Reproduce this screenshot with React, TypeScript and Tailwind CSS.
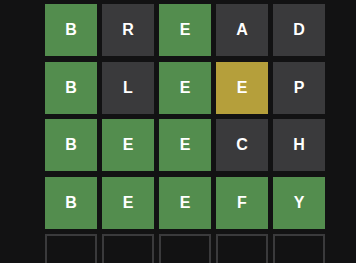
const rows: { letter: string; state: "correct" | "present" | "absent" }[][] = [
  [
    { letter: "B", state: "correct" },
    { letter: "R", state: "absent" },
    { letter: "E", state: "correct" },
    { letter: "A", state: "absent" },
    { letter: "D", state: "absent" },
  ],
  [
    { letter: "B", state: "correct" },
    { letter: "L", state: "absent" },
    { letter: "E", state: "correct" },
    { letter: "E", state: "present" },
    { letter: "P", state: "absent" },
  ],
  [
    { letter: "B", state: "correct" },
    { letter: "E", state: "correct" },
    { letter: "E", state: "correct" },
    { letter: "C", state: "absent" },
    { letter: "H", state: "absent" },
  ],
  [
    { letter: "B", state: "correct" },
    { letter: "E", state: "correct" },
    { letter: "E", state: "correct" },
    { letter: "F", state: "correct" },
    { letter: "Y", state: "correct" },
  ],
];

const tileColor = {
  correct: "bg-[#538d4e]",
  present: "bg-[#b59f3b]",
  absent: "bg-[#3a3a3c]",
};

export default function App() {
  return (
    <div className="h-[263px] w-[356px] overflow-hidden bg-[#121213] pl-[45px] pt-[4px] font-['Liberation_Sans',Arial,sans-serif]">
      <div className="grid w-[280px] grid-cols-5 gap-x-[5px] gap-y-[5.5px]">
        {rows.flat().map((t, i) => (
          <div
            key={i}
            className={`flex h-[52px] w-[52px] items-center justify-center text-[16px] font-bold text-white ${tileColor[t.state]}`}
          >
            {t.letter}
          </div>
        ))}
        {Array.from({ length: 5 }).map((_, i) => (
          <div key={`e${i}`} className="h-[52px] w-[52px] border-2 border-[#3a3a3c]" />
        ))}
      </div>
    </div>
  );
}
